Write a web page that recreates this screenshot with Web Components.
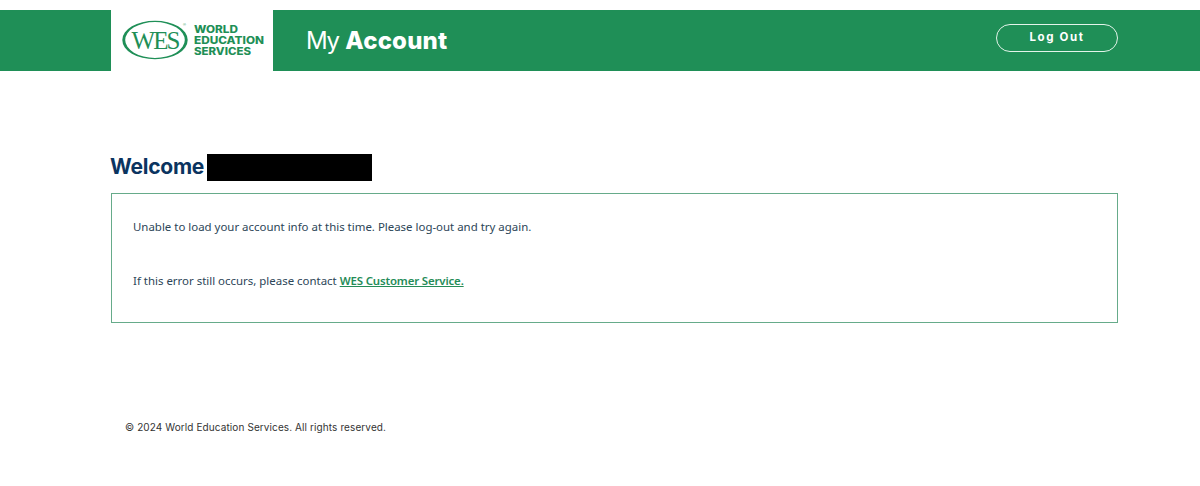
<!DOCTYPE html>
<html lang="en">
<head>
<meta charset="utf-8">
<title>My Account</title>
<style>
  html, body { margin: 0; padding: 0; background: #fff; }
  body { font-family: "Inter", "Liberation Sans", sans-serif; }
  wes-message a { color: #258c58; font-weight: 600; letter-spacing: -0.15px; }
</style>
</head>
<body>
<wes-page>
  <wes-header slot="header" title-light="My" title-bold="Account"></wes-header>
  <wes-welcome slot="main"></wes-welcome>
  <wes-message slot="main">
    <p>Unable to load your account info at this time. Please log-out and try again.</p>
    <p>If this error still occurs, please contact <a href="#">WES Customer Service.</a></p>
  </wes-message>
  <wes-footer slot="footer"></wes-footer>
</wes-page>

<script>
class WesPage extends HTMLElement {
  constructor() {
    super();
    this.attachShadow({ mode: "open" });
    this.shadowRoot.innerHTML = `
      <style>
        :host { display: block; padding-top: 10px; }
        main { padding: 83px 82px 0 111px; }
        footer { padding: 96px 0 0 125px; }
      </style>
      <slot name="header"></slot>
      <main><slot name="main"></slot></main>
      <footer><slot name="footer"></slot></footer>
    `;
  }
}

class WesLogo extends HTMLElement {
  constructor() {
    super();
    this.attachShadow({ mode: "open" });
    this.shadowRoot.innerHTML = `
      <style>
        :host { display: block; width: 162px; height: 61px; background: #fff; }
        svg { display: block; }
      </style>
      <svg width="162" height="61" viewBox="0 0 162 61" role="img" aria-label="WES World Education Services">
        <!-- ring is two ellipses so the sides come out thicker than top and bottom -->
        <path fill="#1f8f57" fill-rule="evenodd" d="M11.3 30a32.7 19.3 0 1 0 65.4 0a32.7 19.3 0 1 0 -65.4 0z M14.2 30a29.8 17.9 0 1 0 59.6 0a29.8 17.9 0 1 0 -59.6 0z"/>
        <text x="44" y="38.5" text-anchor="middle" font-family="Liberation Serif" font-size="25" letter-spacing="-2" fill="#1f8f57">WES</text>
        <text x="72" y="16" font-family="Liberation Sans" font-size="4" fill="#1f8f57">®</text>
        <g font-family="Inter, Liberation Sans" font-weight="800" font-size="10" fill="#1f8f57">
          <text x="83" y="23.4" textLength="44" lengthAdjust="spacingAndGlyphs">WORLD</text>
          <text x="83" y="34.2" textLength="70" lengthAdjust="spacingAndGlyphs">EDUCATION</text>
          <text x="83" y="45" textLength="57" lengthAdjust="spacingAndGlyphs">SERVICES</text>
        </g>
      </svg>
    `;
  }
}

class WesHeader extends HTMLElement {
  constructor() {
    super();
    this.attachShadow({ mode: "open" });
  }

  connectedCallback() {
    const light = this.getAttribute("title-light");
    const bold = this.getAttribute("title-bold");
    this.shadowRoot.innerHTML = `
      <style>
        :host {
          display: flex;
          align-items: flex-start;
          height: 61px;
          padding: 0 82px 0 111px;
          background: #1f8f57;
          color: #fff;
        }
        h1 {
          flex: 1;
          margin: 0 0 0 33px;
          font-size: 24px;
          font-weight: 400;
          line-height: 61px;
        }
        span { letter-spacing: -1.4px; }
        b { font-weight: 800; letter-spacing: 0.2px; }
        wes-button { margin-top: 14px; }
      </style>
      <wes-logo></wes-logo>
      <h1><span>${light}</span> <b>${bold}</b></h1>
      <wes-button>Log Out</wes-button>
    `;
  }
}

class WesButton extends HTMLElement {
  constructor() {
    super();
    this.attachShadow({ mode: "open" });
    this.shadowRoot.innerHTML = `
      <style>
        :host { display: block; }
        button {
          display: block;
          box-sizing: border-box;
          width: 122px;
          height: 28px;
          padding: 0 0 2px;
          border: 1.5px solid #e3f4ea;
          border-radius: 14px;
          background: transparent;
          color: #fff;
          font: 700 11.5px "Inter", "Liberation Sans", sans-serif;
          letter-spacing: 1.6px;
          cursor: pointer;
        }
      </style>
      <button type="button"><slot></slot></button>
    `;
  }
}

class WesWelcome extends HTMLElement {
  constructor() {
    super();
    this.attachShadow({ mode: "open" });
    this.shadowRoot.innerHTML = `
      <style>
        :host {
          display: flex;
          align-items: center;
          height: 27px;
          margin-bottom: 12px;
          color: #0b3460;
        }
        h2 {
          width: 92px;
          margin: 0 0 2px -1px;
          font-size: 21px;
          font-weight: 700;
          letter-spacing: -0.25px;
          line-height: 25px;
          white-space: nowrap;
        }
        .redacted {
          display: block;
          width: 165px;
          height: 27px;
          margin-left: 5px;
          background: #000;
        }
      </style>
      <h2>Welcome</h2>
      <span class="redacted"></span>
    `;
  }
}

class WesMessage extends HTMLElement {
  constructor() {
    super();
    this.attachShadow({ mode: "open" });
    this.shadowRoot.innerHTML = `
      <style>
        :host {
          display: block;
          box-sizing: border-box;
          height: 130px;
          padding: 21px 21px 0;
          border: 1px solid #66ab8a;
          color: #2d4658;
          font: 11.45px/24px "Noto Sans", "Open Sans", sans-serif;
        }
        ::slotted(p) { margin: 0 0 30px; }
      </style>
      <slot></slot>
    `;
  }
}

class WesFooter extends HTMLElement {
  constructor() {
    super();
    this.attachShadow({ mode: "open" });
    this.shadowRoot.innerHTML = `
      <style>
        :host {
          display: block;
          color: #333;
          font-size: 10px;
          line-height: 16px;
          letter-spacing: 0.1px;
        }
      </style>
      © 2024 World Education Services. All rights reserved.
    `;
  }
}

customElements.define("wes-page", WesPage);
customElements.define("wes-logo", WesLogo);
customElements.define("wes-button", WesButton);
customElements.define("wes-header", WesHeader);
customElements.define("wes-welcome", WesWelcome);
customElements.define("wes-message", WesMessage);
customElements.define("wes-footer", WesFooter);
</script>
</body>
</html>
